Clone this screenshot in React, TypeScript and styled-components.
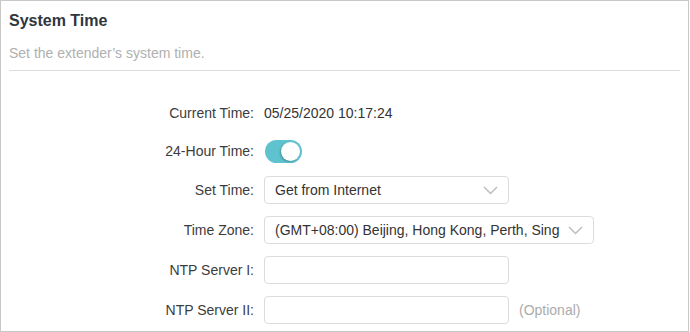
import React from 'react'
import styled, { createGlobalStyle } from 'styled-components'

const GlobalStyle = createGlobalStyle`
  html, body {
    margin: 0;
    padding: 0;
    background: #ffffff;
  }
  body {
    font-family: "Liberation Sans", Arial, sans-serif;
  }
`

const Panel = styled.div`
  box-sizing: border-box;
  width: 689px;
  height: 332px;
  border: 1px solid #c8c8c8;
  background: #ffffff;
  overflow: hidden;
`

const Header = styled.div`
  padding: 10px 8px 0;
`

const Title = styled.h2`
  margin: 0;
  font-size: 16px;
  line-height: 20px;
  font-weight: bold;
  color: #2f3640;
`

const Subtitle = styled.p`
  margin: 12px 0 0;
  font-size: 14px;
  line-height: 20px;
  color: #b0b0b0;
`

const Divider = styled.div`
  height: 1px;
  margin: 7px 8px 0;
  background: #dcdcdc;
`

const Form = styled.div`
  display: flex;
  flex-direction: column;
  gap: 12px;
  margin-top: 29px;
`

const Row = styled.div<{ tight?: boolean }>`
  display: grid;
  grid-template-columns: 253px auto;
  column-gap: 10px;
  align-items: center;
  height: ${({ tight }) => (tight ? '26px' : '28px')};
  font-size: 14px;
`

const Label = styled.div`
  text-align: right;
  color: #3c3c3c;
`

const Value = styled.div`
  display: flex;
  align-items: center;
  color: #333333;
`

const Toggle = styled.div<{ on: boolean }>`
  position: relative;
  box-sizing: border-box;
  width: 37px;
  height: 23px;
  margin-left: 1px;
  border-radius: 12px;
  background: ${({ on }) => (on ? '#5ec3cf' : '#cccccc')};
`

const Knob = styled.span<{ on: boolean }>`
  position: absolute;
  top: 2px;
  left: ${({ on }) => (on ? '16px' : '2px')};
  width: 19px;
  height: 19px;
  border-radius: 50%;
  background: #ffffff;
  box-shadow: -1px 1px 2px rgba(0, 0, 0, 0.25);
`

const SelectBox = styled.div<{ width: number }>`
  display: flex;
  align-items: center;
  box-sizing: border-box;
  width: ${({ width }) => width}px;
  height: 28px;
  padding: 0 10px 0 10px;
  border: 1px solid #dcdcdc;
  border-radius: 4px;
  color: #333333;
`

const SelectText = styled.span`
  flex: 1;
  min-width: 0;
  margin-right: 8px;
  line-height: 26px;
  white-space: nowrap;
  overflow: hidden;
`

const Chevron = styled.svg`
  flex: none;
  margin-top: 1px;
`

const TextInput = styled.input`
  box-sizing: border-box;
  width: 245px;
  height: 28px;
  padding: 0 10px;
  border: 1px solid #dcdcdc;
  border-radius: 4px;
  font: inherit;
  color: #333333;
  outline: none;
`

const Hint = styled.span`
  margin-left: 10px;
  color: #ababab;
`

const Select: React.FC<{ width: number; text: string }> = ({ width, text }) => (
  <SelectBox width={width}>
    <SelectText>{text}</SelectText>
    <Chevron width="15" height="9" viewBox="0 0 15 9">
      <path d="M1 1 L7.5 7.5 L14 1" fill="none" stroke="#bdbdbd" strokeWidth="1.5" />
    </Chevron>
  </SelectBox>
)

const App: React.FC = () => {
  return (
    <>
      <GlobalStyle />
      <Panel>
        <Header>
          <Title>System Time</Title>
          <Subtitle>Set the extender’s system time.</Subtitle>
        </Header>
        <Divider />
        <Form>
          <Row tight>
            <Label>Current Time:</Label>
            <Value>05/25/2020 10:17:24</Value>
          </Row>
          <Row tight>
            <Label>24-Hour Time:</Label>
            <Value>
              <Toggle on>
                <Knob on />
              </Toggle>
            </Value>
          </Row>
          <Row>
            <Label>Set Time:</Label>
            <Value>
              <Select width={245} text="Get from Internet" />
            </Value>
          </Row>
          <Row>
            <Label>Time Zone:</Label>
            <Value>
              <Select width={330} text="(GMT+08:00) Beijing, Hong Kong, Perth, Singapore" />
            </Value>
          </Row>
          <Row>
            <Label>NTP Server I:</Label>
            <Value>
              <TextInput />
            </Value>
          </Row>
          <Row>
            <Label>NTP Server II:</Label>
            <Value>
              <TextInput />
              <Hint>(Optional)</Hint>
            </Value>
          </Row>
        </Form>
      </Panel>
    </>
  )
}

export default App
